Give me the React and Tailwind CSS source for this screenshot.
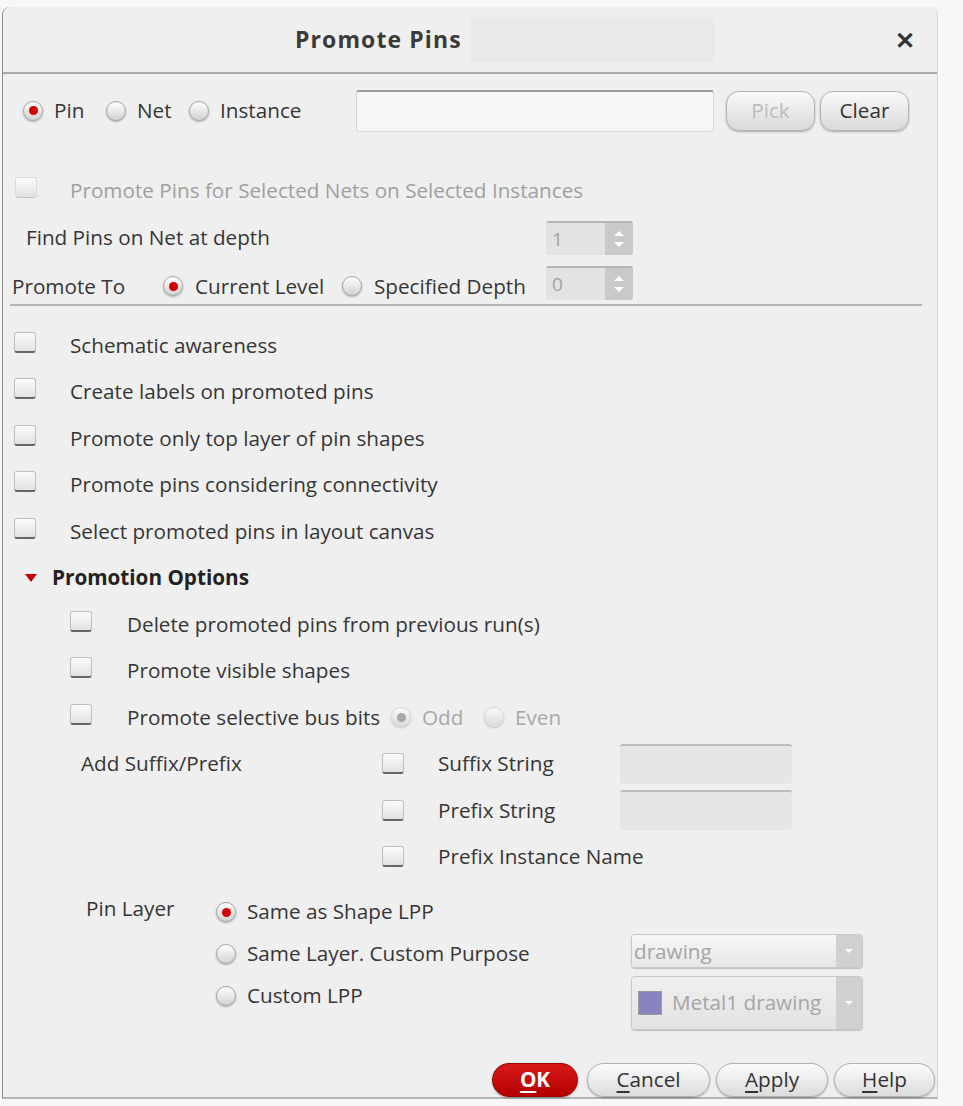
import React from "react";

// Promote Pins dialog

const font = { fontFamily: '"Open Sans", "Noto Sans", sans-serif' };

const Radio = ({ on, dim }) => (
  <span
    className={`inline-flex items-center justify-center w-[20px] h-[20px] rounded-full border shrink-0 bg-linear-to-b from-white to-[#d2d2d2] shadow-[0_1px_2px_rgba(0,0,0,0.3)] ${
      dim ? "border-[#d2d2d2] opacity-70" : "border-[#a6a6a6]"
    }`}
  >
    {on && (
      <span
        className={`w-[9px] h-[9px] rounded-full ${dim ? "bg-[#8a8a8a]" : "bg-[#d40000]"}`}
      />
    )}
  </span>
);

const Check = ({ dim }) => (
  <span
    className={`inline-block w-[22px] h-[21px] rounded-[3px] border shrink-0 bg-linear-to-b from-[#fbfbfb] to-[#e2e2e2] ${
      dim
        ? "border-[#dadada] border-b-[#c4c4c4]"
        : "border-[#bfbfbf] border-b-2 border-b-[#666]"
    }`}
  />
);

const Spin = ({ value }) => (
  <div className="flex w-[87px] h-[34px] rounded-[3px] border-t-2 border-[#b4b4b4] overflow-hidden">
    <div className="flex-1 bg-[#e3e3e3] text-[#a2a2a2] text-[19px] pl-[6px] leading-[32px]">
      {value}
    </div>
    <div className="w-[28px] bg-[#c9c9c9] flex flex-col items-center justify-center gap-[6px]">
      <span className="w-0 h-0 border-l-[5px] border-r-[5px] border-b-[5px] border-l-transparent border-r-transparent border-b-white" />
      <span className="w-0 h-0 border-l-[5px] border-r-[5px] border-t-[5px] border-l-transparent border-r-transparent border-t-white" />
    </div>
  </div>
);

const Btn = ({ children, w, disabled }) => (
  <button
    className={`h-[40px] ${w} rounded-[13px] border border-[#b3b3b3] bg-linear-to-b from-[#fafafa] to-[#d9d9d9] shadow-[0_1px_2px_rgba(0,0,0,0.3)] ${
      disabled ? "text-[#bdbdbd]" : "text-[#333]"
    }`}
  >
    {children}
  </button>
);

const FootBtn = ({ children, w, primary }) => (
  <button
    className={`h-[34px] ${w} rounded-full border shadow-[0_1px_2px_rgba(0,0,0,0.3)] ${
      primary
        ? "bg-linear-to-b from-[#d81818] to-[#b30000] border-[#9a0000] text-white font-bold"
        : "bg-linear-to-b from-[#fbfbfb] to-[#dcdcdc] border-[#b0b0b0] text-[#333]"
    }`}
  >
    {children}
  </button>
);

const Row = ({ children, className = "" }) => (
  <div className={`flex items-center h-[46.5px] ${className}`}>{children}</div>
);

const Field = () => (
  <div className="w-[172px] h-[40px] rounded-[3px] border-t-2 border-[#bcbcbc] bg-[#e6e6e6]" />
);

const Arrow = () => (
  <div className="w-[26px] bg-[#d0d0d0] flex items-center justify-center">
    <span className="w-0 h-0 border-l-[4px] border-r-[4px] border-t-[4px] border-l-transparent border-r-transparent border-t-white" />
  </div>
);

export default function App() {
  return (
    <div className="w-[963px] h-[1106px] bg-[#f7f7f7] pt-[7px] pl-[2px]" style={font}>
      <div className="w-[936px] h-[1092px] bg-[#efefef] border-l border-[#8e8e8e] border-r border-r-[#d4d4d4] border-b-2 border-b-[#b5b5b5] rounded-tl-[8px] rounded-tr-[8px] text-[#363636] text-[20.7px]">
        {/* title bar */}
        <div className="h-[67px] flex items-center border-b-2 border-[#a9a9a9]">
          <span className="ml-[292px] w-[175px] text-[23px] tracking-[1.1px] font-bold text-[#3a3a3a]">
            Promote Pins
          </span>
          <div className="w-[245px] h-[45px] bg-[#e9e9e9]" />
          <span className="ml-auto mr-[22px] text-[24px] font-bold text-[#333] leading-none">✕</span>
        </div>

        {/* type row */}
        <div className="flex items-center h-[46px] mt-[14px]">
          <div className="ml-[20px] w-[83px] flex items-center gap-[11px]">
            <Radio on />
            <span>Pin</span>
          </div>
          <div className="w-[83px] flex items-center gap-[11px]">
            <Radio />
            <span>Net</span>
          </div>
          <div className="w-[167px] flex items-center gap-[11px]">
            <Radio />
            <span>Instance</span>
          </div>
          <div className="w-[358px] h-[42px] bg-[#f6f6f6] border border-[#d8d8d8] border-t-2 border-t-[#9c9c9c] rounded-[3px]" />
          <div className="ml-[12px] flex gap-[5px]">
            <Btn w="w-[89px]" disabled>
              Pick
            </Btn>
            <Btn w="w-[89px]">Clear</Btn>
          </div>
        </div>

        <div className="flex items-center h-[46px] mt-[34px] text-[#a0a0a0]">
          <span className="ml-[12px]">
            <Check dim />
          </span>
          <span className="ml-[33px]">Promote Pins for Selected Nets on Selected Instances</span>
        </div>

        <div className="flex items-center h-[48px]">
          <span className="ml-[23px] w-[520px]">Find Pins on Net at depth</span>
          <Spin value="1" />
        </div>

        <div className="flex items-center h-[42px]">
          <div className="flex items-center mt-[7px]">
            <span className="ml-[9px] w-[151px]">Promote To</span>
            <Radio on />
            <span className="ml-[12px] w-[147px]">Current Level</span>
            <Radio />
            <span className="ml-[12px] w-[172px]">Specified Depth</span>
          </div>
          <Spin value="0" />
        </div>
        <div className="ml-[7px] mr-[15px] border-t-2 border-[#b4b4b4]" />

        <div className="mt-[16px]">
          {[
            "Schematic awareness",
            "Create labels on promoted pins",
            "Promote only top layer of pin shapes",
            "Promote pins considering connectivity",
            "Select promoted pins in layout canvas",
          ].map((t) => (
            <Row key={t}>
              <span className="ml-[11px]">
                <Check />
              </span>
              <span className="ml-[34px]">{t}</span>
            </Row>
          ))}

          <Row>
            <span className="ml-[22px] w-0 h-0 border-l-[6px] border-r-[6px] border-t-[8px] border-l-transparent border-r-transparent border-t-[#c40000]" />
            <span className="ml-[15px] font-bold text-[#222]">Promotion Options</span>
          </Row>

          <Row>
            <span className="ml-[67px]">
              <Check />
            </span>
            <span className="ml-[35px]">Delete promoted pins from previous run(s)</span>
          </Row>
          <Row>
            <span className="ml-[67px]">
              <Check />
            </span>
            <span className="ml-[35px]">Promote visible shapes</span>
          </Row>
          <Row>
            <span className="ml-[67px]">
              <Check />
            </span>
            <span className="ml-[35px] w-[264px]">Promote selective bus bits</span>
            <Radio on dim />
            <span className="ml-[11px] w-[62px] text-[#a8a8a8]">Odd</span>
            <Radio dim />
            <span className="ml-[11px] text-[#a8a8a8]">Even</span>
          </Row>

          <div className="flex">
            <div className="ml-[78px] w-[301px] h-[46.5px] flex items-center">Add Suffix/Prefix</div>
            <div className="flex-1">
              <Row>
                <Check />
                <span className="ml-[34px] w-[182px]">Suffix String</span>
                <Field />
              </Row>
              <Row>
                <Check />
                <span className="ml-[34px] w-[182px]">Prefix String</span>
                <Field />
              </Row>
              <Row>
                <Check />
                <span className="ml-[34px]">Prefix Instance Name</span>
              </Row>
            </div>
          </div>
        </div>

        {/* pin layer */}
        <div className="flex mt-[11px]">
          <div className="ml-[83px] w-[130px] h-[42px] flex items-start pt-[2px]">Pin Layer</div>
          <div>
            <div className="flex items-center h-[42px] gap-[11px]">
              <Radio on />
              <span>Same as Shape LPP</span>
            </div>
            <div className="flex items-center h-[42px] gap-[11px]">
              <Radio />
              <span className="w-[373px]">Same Layer. Custom Purpose</span>
              <div className="flex w-[232px] h-[34px] rounded-[4px] border border-[#c8c8c8] overflow-hidden shadow-[0_1px_1px_rgba(0,0,0,0.2)] mt-[-6px]">
                <div className="flex-1 bg-linear-to-b from-[#f8f8f8] to-[#e6e6e6] text-[#a5a5a5] pl-[2px] leading-[32px]">
                  drawing
                </div>
                <Arrow />
              </div>
            </div>
            <div className="flex items-start h-[54px] gap-[11px]">
              <div className="h-[42px] flex items-center gap-[11px]">
                <Radio />
                <span className="w-[373px]">Custom LPP</span>
              </div>
              <div className="flex w-[232px] h-[54px] rounded-[4px] border border-[#c8c8c8] overflow-hidden shadow-[0_1px_1px_rgba(0,0,0,0.2)] mt-[1px]">
                <div className="flex-1 bg-linear-to-b from-[#f0f0f0] to-[#e2e2e2] flex items-center pl-[6px]">
                  <span className="w-[24px] h-[24px] bg-[#8884bd] border border-[#9c9c9c]" />
                  <span className="ml-[10px] text-[#a5a5a5]">Metal1 drawing</span>
                </div>
                <Arrow />
              </div>
            </div>
          </div>
        </div>

        {/* footer */}
        <div className="flex justify-end pr-[2px] mt-[34px]">
          <FootBtn w="w-[86px]" primary>
            <span className="underline underline-offset-4">O</span>K
          </FootBtn>
          <span className="ml-[9px]" />
          <FootBtn w="w-[123px]">
            <span className="underline underline-offset-4">C</span>ancel
          </FootBtn>
          <span className="ml-[6px]" />
          <FootBtn w="w-[112px]">
            <span className="underline underline-offset-4">A</span>pply
          </FootBtn>
          <span className="ml-[6px]" />
          <FootBtn w="w-[101px]">
            <span className="underline underline-offset-4">H</span>elp
          </FootBtn>
        </div>
      </div>
    </div>
  );
}
